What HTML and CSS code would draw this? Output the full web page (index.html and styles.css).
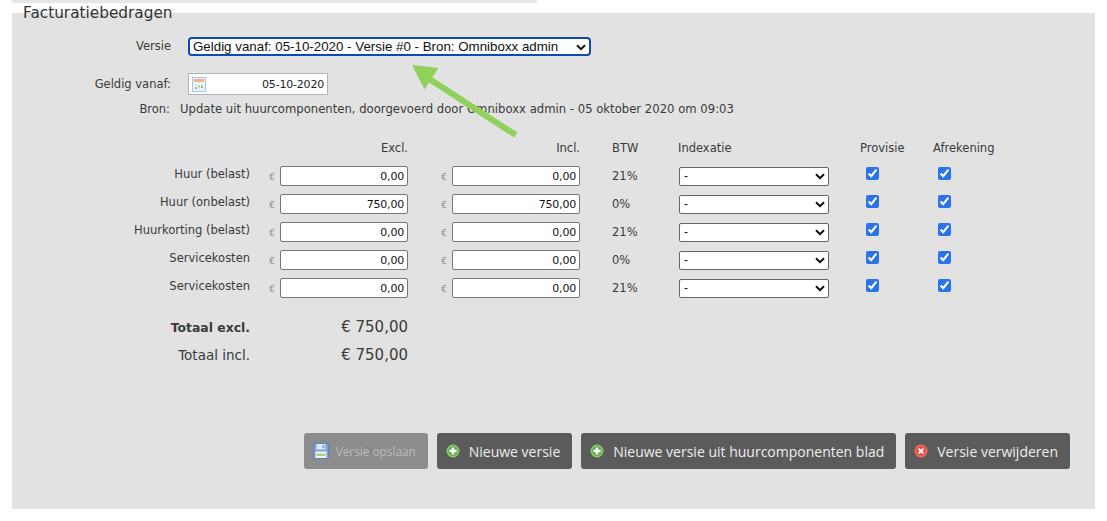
FILE: index.html
```html
<!DOCTYPE html>
<html lang="nl">
<head>
<meta charset="utf-8">
<title>Facturatiebedragen</title>
<link rel="stylesheet" href="styles.css">
</head>
<body>
<div class="strip"></div>
<section class="panel">
  <h2 class="legend">Facturatiebedragen</h2>

  <div class="meta-row version-row">
    <label class="meta-label">Versie</label>
    <div class="select-wrap version-wrap">
      <select class="version-select"><option>Geldig vanaf: 05-10-2020 - Versie #0 - Bron: Omniboxx admin</option></select>
      <svg class="chevron" width="10" height="7" viewBox="0 0 10 7"><path d="M1 1.200 5 5.200 9 1.200" fill="none" stroke="#111" stroke-width="2"/></svg>
    </div>
  </div>

  <div class="meta-row date-row">
    <label class="meta-label">Geldig vanaf:</label>
    <div class="date-box">
      <svg class="cal" width="14" height="15" viewBox="0 0 14 15">
        <rect x=".5" y=".5" width="13" height="14" fill="#eef4fb" stroke="#a9c3e6"/>
        <rect x="2" y="2" width="10" height="3" fill="#f5b183"/>
        <path d="M3 7h2v2H3zM6 7h2v2H6zM9 7h2v2H9zM6 10h2v2H6z" fill="#dbe3ea"/>
        <path d="M3 10h2v2H3zM9 9h2v2H9zM6 9h2v1H6z" fill="#8cbf78"/>
      </svg>
      <span>05-10-2020</span>
    </div>
  </div>

  <div class="meta-row source-row">
    <span class="meta-label source-label">Bron:</span>
    <span class="source-text">Update uit huurcomponenten, doorgevoerd door Omniboxx admin - 05 oktober 2020 om 09:03</span>
  </div>

  <div class="amounts">
    <span></span><span></span>
    <span class="head right">Excl.</span><span></span>
    <span class="head right">Incl.</span>
    <span class="head btw">BTW</span>
    <span class="head index-head">Indexatie</span>
    <span class="head prov-head">Provisie</span>
    <span class="head afr-head">Afrekening</span>

    <span class="row-label">Huur (belast)</span><span class="euro">€</span><input class="amount" value="0,00"><span class="euro">€</span><input class="amount" value="0,00"><span class="btw">21%</span>
    <div class="select-wrap"><select class="index-select"><option>-</option></select><svg class="chevron" width="10" height="7" viewBox="0 0 10 7"><path d="M1 1.200 5 5.200 9 1.200" fill="none" stroke="#111" stroke-width="2"/></svg></div>
    <span class="check prov"><input type="checkbox" checked></span><span class="check afr"><input type="checkbox" checked></span>

    <span class="row-label">Huur (onbelast)</span><span class="euro">€</span><input class="amount" value="750,00"><span class="euro">€</span><input class="amount" value="750,00"><span class="btw">0%</span>
    <div class="select-wrap"><select class="index-select"><option>-</option></select><svg class="chevron" width="10" height="7" viewBox="0 0 10 7"><path d="M1 1.200 5 5.200 9 1.200" fill="none" stroke="#111" stroke-width="2"/></svg></div>
    <span class="check prov"><input type="checkbox" checked></span><span class="check afr"><input type="checkbox" checked></span>

    <span class="row-label">Huurkorting (belast)</span><span class="euro">€</span><input class="amount" value="0,00"><span class="euro">€</span><input class="amount" value="0,00"><span class="btw">21%</span>
    <div class="select-wrap"><select class="index-select"><option>-</option></select><svg class="chevron" width="10" height="7" viewBox="0 0 10 7"><path d="M1 1.200 5 5.200 9 1.200" fill="none" stroke="#111" stroke-width="2"/></svg></div>
    <span class="check prov"><input type="checkbox" checked></span><span class="check afr"><input type="checkbox" checked></span>

    <span class="row-label">Servicekosten</span><span class="euro">€</span><input class="amount" value="0,00"><span class="euro">€</span><input class="amount" value="0,00"><span class="btw">0%</span>
    <div class="select-wrap"><select class="index-select"><option>-</option></select><svg class="chevron" width="10" height="7" viewBox="0 0 10 7"><path d="M1 1.200 5 5.200 9 1.200" fill="none" stroke="#111" stroke-width="2"/></svg></div>
    <span class="check prov"><input type="checkbox" checked></span><span class="check afr"><input type="checkbox" checked></span>

    <span class="row-label">Servicekosten</span><span class="euro">€</span><input class="amount" value="0,00"><span class="euro">€</span><input class="amount" value="0,00"><span class="btw">21%</span>
    <div class="select-wrap"><select class="index-select"><option>-</option></select><svg class="chevron" width="10" height="7" viewBox="0 0 10 7"><path d="M1 1.200 5 5.200 9 1.200" fill="none" stroke="#111" stroke-width="2"/></svg></div>
    <span class="check prov"><input type="checkbox" checked></span><span class="check afr"><input type="checkbox" checked></span>
  </div>

  <div class="totals">
    <span class="total-label strong">Totaal excl.</span><span class="total-value">€ 750,00</span>
    <span class="total-label">Totaal incl.</span><span class="total-value">€ 750,00</span>
  </div>

  <div class="actions">
    <button class="btn btn-disabled">
      <svg width="16" height="16" viewBox="0 0 16 16"><rect x=".5" y=".5" width="15" height="15" rx="1" fill="#7d9fd8" stroke="#5b7fc0"/><rect x="3.500" y="1" width="9" height="5.500" fill="#e4ebf5"/><rect x="9.500" y="2" width="2" height="3.500" fill="#7d9fd8"/><rect x="2.500" y="8.500" width="11" height="6.500" fill="#f4f6f2"/><rect x="3.500" y="10.500" width="9" height="2.500" fill="#a6d27e"/></svg>
      Versie opslaan
    </button>
    <button class="btn">
      <svg width="14" height="14" viewBox="0 0 14 14"><circle cx="7" cy="7" r="6.500" fill="#8ccb6c"/><circle cx="7" cy="7" r="5" fill="#66ad49"/><path d="M3.500 7h7M7 3.500v7" stroke="#fff" stroke-width="2.400"/></svg>
      Nieuwe versie
    </button>
    <button class="btn">
      <svg width="14" height="14" viewBox="0 0 14 14"><circle cx="7" cy="7" r="6.500" fill="#8ccb6c"/><circle cx="7" cy="7" r="5" fill="#66ad49"/><path d="M3.500 7h7M7 3.500v7" stroke="#fff" stroke-width="2.400"/></svg>
      Nieuwe versie uit huurcomponenten blad
    </button>
    <button class="btn">
      <svg width="14" height="14" viewBox="0 0 14 14"><circle cx="7" cy="7" r="6.500" fill="#f2705f"/><circle cx="7" cy="7" r="5" fill="#e9503f"/><path d="M4.700 4.700l4.600 4.600M9.300 4.700l-4.600 4.600" stroke="#fff" stroke-width="1.900"/></svg>
      Versie verwijderen
    </button>
  </div>

  <svg class="arrow" width="120" height="85" viewBox="0 0 120 85">
    <path d="M0 0 26.500 3 12.500 24.500Z M16 9.500 105.500 67.500 102 72.500 12.500 14.500Z" fill="#8fd15a"/>
  </svg>
</section>
</body>
</html>
```
FILE: styles.css
```css
* { box-sizing: border-box; }

body {
  margin: 0;
  padding: 0 12px;
  background: #fff;
  color: #3a3a3a;
  font-family: "DejaVu Sans", "Liberation Sans", sans-serif;
  font-size: 11.5px;
}

.strip {
  width: 525px;
  height: 3px;
  background: #e6e6e6;
  margin-bottom: 10px;
}

.panel {
  display: flow-root;
  position: relative;
  width: 1083px;
  height: 496px;
  background: #e2e2e2;
}

.legend {
  margin: -9px 0 0 11px;
  height: 18px;
  font-size: 15.3px;
  line-height: 18px;
  font-weight: 400;
  color: #333;
}

.meta-row {
  display: flex;
  align-items: center;
}

.meta-label {
  width: 159px;
  margin-right: 17px;
  text-align: right;
}

.version-row { margin-top: 14px; height: 20px; }
.date-row { margin-top: 17px; height: 22px; }
.source-row { margin-top: 5px; height: 18px; }

.source-label { width: 158px; margin-right: 10px; }
.source-text { font-size: 11.65px; }

.select-wrap { position: relative; display: block; }

.chevron {
  position: absolute;
  right: 5px;
  top: 7px;
  pointer-events: none;
}

select {
  appearance: none;
  display: block;
  width: 100%;
  background: #fff;
  color: #111;
  margin: 0;
}

.version-wrap { width: 403px; }

.version-select {
  height: 19px;
  padding: 0 3px;
  border: 2px solid #0b4cb4;
  border-radius: 4px;
  font-family: "Liberation Sans", sans-serif;
  font-size: 13.33px;
}

.date-box {
  display: flex;
  align-items: center;
  justify-content: space-between;
  width: 140px;
  height: 22px;
  padding: 0 3px;
  background: #fff;
  border: 1px solid #b3b3b3;
  font-size: 11px;
  letter-spacing: -0.2px;
  color: #222;
}

.cal { display: block; }

.amounts {
  display: grid;
  grid-template-columns: 238px 30px 128px 44px 128px 99px 150px 102px 100px;
  grid-template-rows: 29px repeat(5, 28px);
  margin-top: 15px;
  align-items: center;
}

.head { align-self: start; padding-top: 8px; line-height: 14px; }
.right { text-align: right; }
.btw { padding-left: 32px; }
.index-head { margin-left: -1px; }
.prov-head { padding-left: 31px; }
.afr-head { padding-left: 2px; white-space: nowrap; }

.row-label {
  text-align: right;
  margin-top: -5px;
}

.euro {
  font-size: 9px;
  color: #888;
  text-align: right;
  padding-right: 5px;
  margin-top: 1px;
}

.amount {
  width: 128px;
  height: 20px;
  padding: 0 3px;
  border: 1px solid #777;
  border-radius: 2px;
  background: #fff;
  color: #111;
  text-align: right;
  font-family: "DejaVu Sans", sans-serif;
  font-size: 11px;
  letter-spacing: -0.2px;
}

.index-select {
  height: 19px;
  padding: 0 4px;
  border: 1px solid #666;
  border-radius: 2px;
  font-family: "Liberation Sans", sans-serif;
  font-size: 12px;
}

.index-select + .chevron { top: 6px; right: 4px; }

.check { display: block; margin-top: -5px; }

.check input {
  display: block;
  width: 13px;
  height: 13px;
  margin: 0;
  accent-color: #2a73e8;
}

.prov input { margin-left: 37px; }
.afr input { margin-left: 7px; }

.totals {
  display: grid;
  grid-template-columns: 238px 158px;
  grid-auto-rows: 28px;
  margin-top: 11px;
  align-items: center;
  font-size: 15px;
}

.total-label { text-align: right; font-size: 13.5px; }
.strong { font-weight: 700; font-size: 12.4px; }
.total-value { text-align: right; }

.actions {
  position: absolute;
  left: 0;
  right: 25px;
  bottom: 40px;
  display: flex;
  justify-content: flex-end;
  gap: 9px;
}

.btn {
  display: flex;
  align-items: center;
  gap: 9px;
  height: 36px;
  padding: 0 12px 0 9px;
  border: 0;
  border-radius: 3px;
  background: #5b5b5b;
  color: #ededed;
  font-family: "Open Sans", sans-serif;
  font-size: 14px;
}

.btn-disabled {
  gap: 7px;
  background: #8c8c8c;
  color: #bcbcbc;
  font-size: 11.8px;
}

.arrow {
  position: absolute;
  left: 400px;
  top: 52px;
}
```
